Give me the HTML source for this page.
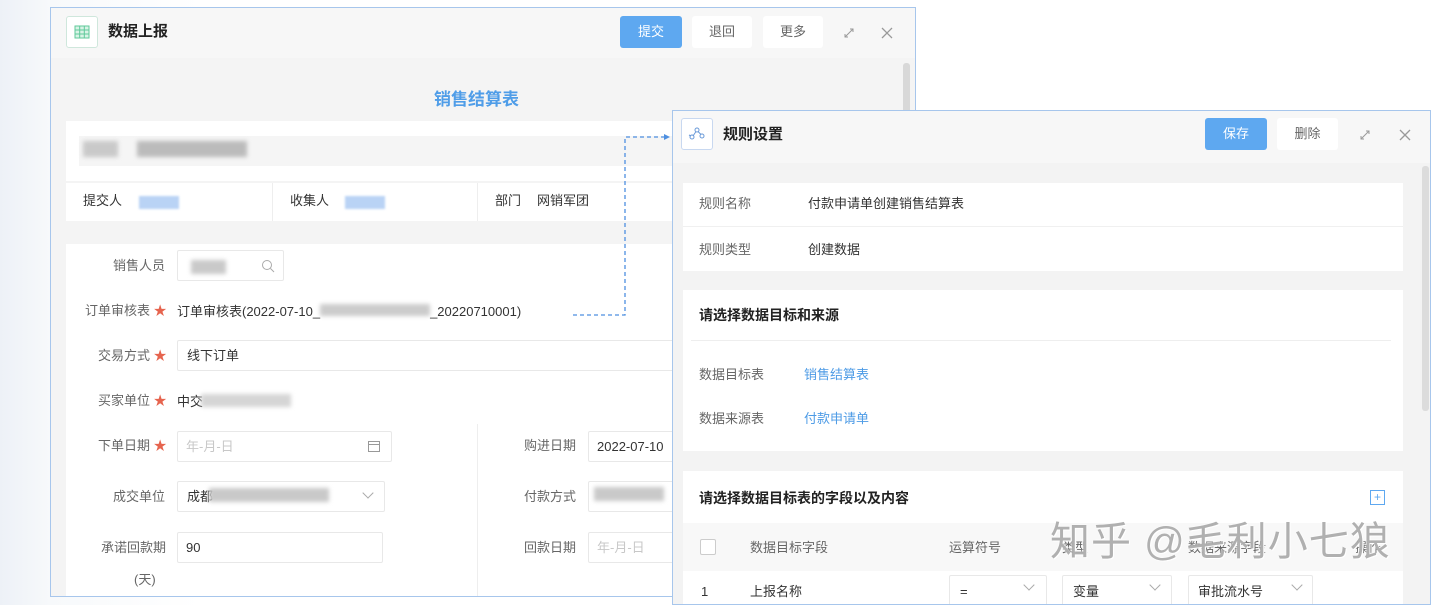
<!DOCTYPE html>
<html><head><meta charset="utf-8"><style>
*{margin:0;padding:0;box-sizing:border-box}
body{width:1440px;height:600px;overflow:hidden;background:linear-gradient(90deg,#edf1f7 0,#f7f9fb 50px,#fff 200px);font-family:"Liberation Sans","Noto Sans CJK SC",sans-serif;font-size:13px;color:#333;position:relative}
.a{position:absolute}
.t{position:absolute;white-space:nowrap;line-height:1}
.win{position:absolute;border:1.5px solid #a7c6ec;background:#f4f4f4;overflow:hidden}
.hd{position:absolute;left:0;top:0;right:0;background:#f7f7f7}
.btn{position:absolute;height:32px;line-height:32px;text-align:center;border-radius:3px;font-size:13px;background:#fff;color:#666}
.blue{background:#5ea8f0;color:#fff}
.card{position:absolute;background:#fff}
.lbl{color:#666}
.inp{position:absolute;border:1px solid #e8e8e8;background:#fff;height:31px;border-radius:2px}
.star{color:#e6644e}
.blur{position:absolute;background:#c9c9c9;filter:blur(2px)}
.bb{position:absolute;background:#b9d3f5;filter:blur(1px)}
.chev{position:absolute;width:8px;height:8px;border-right:1px solid #aaa;border-bottom:1px solid #aaa;transform:rotate(45deg)}
</style></head><body>

<!-- left window -->
<div class="win" style="left:50px;top:7px;width:866px;height:590px">
 <div class="hd" style="height:50px"></div>
 <div class="a" style="left:15px;top:8px;width:32px;height:32px;border:1px solid #cfe7dc;border-radius:3px;background:#fff">
  <svg width="32" height="32" viewBox="0 0 32 32" class="a" style="left:-1px;top:-1px"><rect x="9" y="10" width="14" height="12" fill="#d8f3e6" stroke="#5fc99a" stroke-width="1"/><path d="M9 14H23M9 18H23M13.7 10V22M18.3 10V22" stroke="#5fc99a" stroke-width="1"/></svg>
 </div>
 <div class="t" style="left:57px;top:16px;font-size:15px;font-weight:bold;color:#222">数据上报</div>
 <div class="btn blue" style="left:569px;top:8px;width:62px">提交</div>
 <div class="btn" style="left:641px;top:8px;width:60px">退回</div>
 <div class="btn" style="left:712px;top:8px;width:60px">更多</div>
 <svg class="a" style="left:790px;top:17px" width="16" height="16"><path d="M4 12L12 4M9 4h3v3M4 9v3h3" stroke="#999" fill="none" stroke-width="1"/></svg>
 <svg class="a" style="left:829px;top:18px" width="14" height="14"><path d="M2 2L12 12M12 2L2 12" stroke="#999" stroke-width="1.3"/></svg>
 <div class="a" style="left:852px;top:55px;width:7px;height:80px;background:#d8d8d8;border-radius:3px"></div>
 <div class="t" style="left:383px;top:83px;font-size:17px;font-weight:bold;color:#4f9de8">销售结算表</div>
 <div class="card" style="left:15px;top:113px;width:830px;height:60px"></div>
 <div class="a" style="left:28px;top:128px;width:820px;height:30px;background:#f5f5f5"></div>
 <div class="blur" style="left:32px;top:133px;width:35px;height:16px"></div>
 <div class="blur" style="left:86px;top:133px;width:110px;height:16px;background:#bbb"></div>
 <div class="card" style="left:15px;top:175px;width:830px;height:38px"></div>
 <div class="a" style="left:221px;top:175px;width:1px;height:38px;background:#eee"></div>
 <div class="a" style="left:426px;top:175px;width:1px;height:38px;background:#eee"></div>
 <div class="t" style="left:32px;top:186px">提交人</div><div class="bb" style="left:88px;top:188px;width:40px;height:13px"></div>
 <div class="t" style="left:239px;top:186px">收集人</div><div class="bb" style="left:294px;top:188px;width:40px;height:13px"></div>
 <div class="t" style="left:444px;top:186px">部门</div><div class="t" style="left:486px;top:186px">网销军团</div>
 <div class="card" style="left:15px;top:236px;width:830px;height:360px"></div>
 <div class="a" style="left:426px;top:416px;width:1px;height:180px;background:#eee"></div>
 <div class="t lbl" style="left:62px;top:251px">销售人员</div>
 <div class="inp" style="left:126px;top:242px;width:107px"></div><div class="blur" style="left:140px;top:252px;width:35px;height:14px"></div>
 <svg class="a" style="left:210px;top:251px" width="14" height="14"><circle cx="6" cy="6" r="4.5" stroke="#aaa" fill="none"/><path d="M9.5 9.5L13 13" stroke="#aaa"/></svg>
 <div class="t lbl" style="left:34px;top:296px">订单审核表 <span class="star">★</span></div>
 <div class="t" style="left:126px;top:296px">订单审核表(2022-07-10_<span style="display:inline-block;width:110px;height:12px;background:#ccc;filter:blur(2px)"></span>_20220710001)</div>
 <div class="t lbl" style="left:47px;top:341px">交易方式 <span class="star">★</span></div>
 <div class="inp" style="left:126px;top:332px;width:730px"></div><div class="t" style="left:136px;top:341px">线下订单</div>
 <div class="t lbl" style="left:47px;top:386px">买家单位 <span class="star">★</span></div>
 <div class="t" style="left:126px;top:387px">中交</div><div class="blur" style="left:150px;top:386px;width:90px;height:13px;background:#d5d5d5"></div>
 <div class="t lbl" style="left:47px;top:431px">下单日期 <span class="star">★</span></div>
 <div class="inp" style="left:126px;top:423px;width:215px"></div><div class="t" style="left:135px;top:432px;color:#c8c8c8">年-月-日</div>
 <svg class="a" style="left:316px;top:431px" width="14" height="14"><rect x="1.5" y="2.5" width="11" height="10" fill="none" stroke="#999"/><path d="M1.5 5.5H12.5" stroke="#999"/></svg>
 <div class="t lbl" style="left:473px;top:431px">购进日期</div>
 <div class="inp" style="left:537px;top:423px;width:100px"></div><div class="t" style="left:546px;top:432px">2022-07-10</div>
 <div class="t lbl" style="left:62px;top:482px">成交单位</div>
 <div class="inp" style="left:126px;top:473px;width:208px"></div><div class="t" style="left:136px;top:482px">成都</div>
 <div class="blur" style="left:158px;top:480px;width:120px;height:14px"></div>
 <div class="chev" style="left:313px;top:481px"></div>
 <div class="t lbl" style="left:473px;top:482px">付款方式</div>
 <div class="inp" style="left:537px;top:473px;width:100px"></div><div class="blur" style="left:543px;top:479px;width:70px;height:14px"></div>
 <div class="t lbl" style="left:50px;top:533px">承诺回款期</div>
 <div class="inp" style="left:126px;top:524px;width:206px"></div><div class="t" style="left:135px;top:533px">90</div>
 <div class="t lbl" style="left:83px;top:565px">(天)</div>
 <div class="t lbl" style="left:473px;top:533px">回款日期</div>
 <div class="inp" style="left:537px;top:524px;width:100px"></div><div class="t" style="left:546px;top:533px;color:#c8c8c8">年-月-日</div>
</div>

<!-- dashed connector -->
<svg class="a" style="left:560px;top:125px" width="120" height="200"><path d="M13 190H65V12H106" stroke="#4d8fe0" stroke-width="1.3" stroke-dasharray="4 3" fill="none"/><path d="M104 9L110 12L104 15Z" fill="#4d8fe0"/></svg>

<!-- right window -->
<div class="win" style="left:672px;top:110px;width:759px;height:495px;background:#f3f3f3">
 <div class="hd" style="height:52px"></div>
 <div class="a" style="left:8px;top:7px;width:32px;height:32px;border:1px solid #c8d8f0;border-radius:3px;background:#fff">
  <svg width="30" height="30" class="a"><circle cx="10" cy="18" r="2" fill="none" stroke="#6a9ad8"/><circle cx="15" cy="11" r="2" fill="none" stroke="#6a9ad8"/><circle cx="20" cy="17" r="2" fill="none" stroke="#6a9ad8"/><path d="M11 17L14 12.5M16 12.5L19 15.5M7 16L9 17" stroke="#6a9ad8"/></svg>
 </div>
 <div class="t" style="left:50px;top:16px;font-size:15px;font-weight:bold;color:#222">规则设置</div>
 <div class="btn blue" style="left:532px;top:7px;width:62px">保存</div>
 <div class="btn" style="left:604px;top:7px;width:61px">删除</div>
 <svg class="a" style="left:684px;top:16px" width="16" height="16"><path d="M4 12L12 4M9 4h3v3M4 9v3h3" stroke="#999" fill="none" stroke-width="1"/></svg>
 <svg class="a" style="left:725px;top:17px" width="14" height="14"><path d="M2 2L12 12M12 2L2 12" stroke="#999" stroke-width="1.3"/></svg>
 <div class="a" style="left:749px;top:55px;width:7px;height:245px;background:#dcdcdc;border-radius:3px"></div>
 <div class="card" style="left:10px;top:72px;width:720px;height:88px"></div>
 <div class="a" style="left:10px;top:115px;width:720px;height:1px;background:#f0f0f0"></div>
 <div class="t lbl" style="left:26px;top:86px">规则名称</div><div class="t" style="left:135px;top:86px">付款申请单创建销售结算表</div>
 <div class="t lbl" style="left:26px;top:132px">规则类型</div><div class="t" style="left:135px;top:132px">创建数据</div>
 <div class="card" style="left:10px;top:179px;width:720px;height:161px"></div>
 <div class="t" style="left:26px;top:197px;font-size:14px;font-weight:bold;color:#222">请选择数据目标和来源</div>
 <div class="a" style="left:18px;top:229px;width:700px;height:1px;background:#eee"></div>
 <div class="t lbl" style="left:26px;top:257px">数据目标表</div><div class="t" style="left:131px;top:257px;color:#4d9be6">销售结算表</div>
 <div class="t lbl" style="left:26px;top:301px">数据来源表</div><div class="t" style="left:131px;top:301px;color:#4d9be6">付款申请单</div>
 <div class="card" style="left:10px;top:360px;width:720px;height:140px"></div>
 <div class="t" style="left:26px;top:380px;font-size:14px;font-weight:bold;color:#222">请选择数据目标表的字段以及内容</div>
 <div class="a" style="left:697px;top:379px;width:15px;height:15px;border:1px solid #5ea8f0;color:#5ea8f0;font-size:12px;line-height:13px;text-align:center">+</div>
 <div class="a" style="left:10px;top:412px;width:720px;height:48px;background:#f8f8f8"></div>
 <div class="a" style="left:27px;top:428px;width:16px;height:16px;border:1px solid #ccc;background:#fff;border-radius:2px"></div>
 <div class="t lbl" style="left:77px;top:430px">数据目标字段</div>
 <div class="t lbl" style="left:276px;top:430px">运算符号</div>
 <div class="t lbl" style="left:389px;top:430px">类型</div>
 <div class="t lbl" style="left:515px;top:430px">数据来源字段</div>
 <div class="t lbl" style="left:682px;top:430px">操作</div>
 <div class="t" style="left:28px;top:474px">1</div>
 <div class="t" style="left:77px;top:474px">上报名称</div>
 <div class="inp" style="left:276px;top:464px;width:98px"></div><div class="t" style="left:287px;top:474px">=</div><div class="chev" style="left:352px;top:470px"></div>
 <div class="inp" style="left:389px;top:464px;width:110px"></div><div class="t" style="left:400px;top:474px">变量</div><div class="chev" style="left:478px;top:470px"></div>
 <div class="inp" style="left:515px;top:464px;width:125px"></div><div class="t" style="left:525px;top:474px">审批流水号</div><div class="chev" style="left:620px;top:470px"></div>
</div>

<!-- watermark -->
<div class="t" style="left:1050px;top:522px;font-size:40px;color:rgba(150,150,150,0.75);text-shadow:0 0 2px #fff,1px 1px 0 #fff;letter-spacing:1px">知乎 @毛利小七狼</div>
</body></html>
